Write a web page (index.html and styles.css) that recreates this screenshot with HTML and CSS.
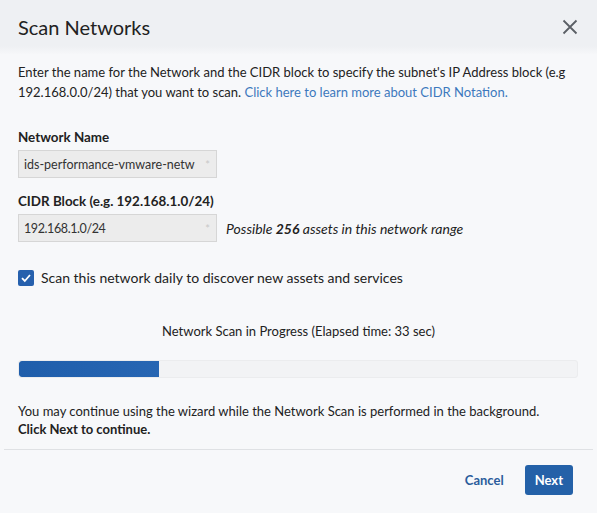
FILE: index.html
```html
<!DOCTYPE html>
<html>
<head>
<meta charset="utf-8">
<link rel="stylesheet" href="styles.css">
</head>
<body>
<div class="modal">
  <div class="header">
    <h1 class="title">Scan Networks</h1>
    <svg class="close" width="16" height="16" viewBox="0 0 16 16"><path d="M1.5 1.5 L14.5 14.5 M14.5 1.5 L1.5 14.5" stroke="#5b5f66" stroke-width="1.8" fill="none"/></svg>
  </div>
  <div class="body">
    <p class="intro">Enter the name for the Network and the CIDR block to specify the subnet's IP Address block (e.g 192.168.0.0/24) that you want to scan. <span class="link">Click here to learn more about CIDR Notation.</span></p>
    <div class="field">
      <label class="label">Network Name</label>
      <div class="input"><span>ids-performance-vmware-netw</span><span class="ast">*</span></div>
    </div>
    <div class="field">
      <label class="label">CIDR Block (e.g. 192.168.1.0/24)</label>
      <div class="row">
        <div class="input"><span class="ip">192.168.1.0/24</span><span class="ast">*</span></div>
        <span class="hint">Possible <b>256</b> assets in this network range</span>
      </div>
    </div>
    <div class="check">
      <span class="box"><svg width="12" height="12" viewBox="0 0 12 12"><path d="M2 6.2 L4.8 9 L10 3" stroke="#fff" stroke-width="1.8" fill="none"/></svg></span>
      <span>Scan this network daily to discover new assets and services</span>
    </div>
    <div class="status">Network Scan in Progress (Elapsed time: 33 sec)</div>
    <div class="track"><div class="fill" style="width:25%"></div></div>
    <p class="note">You may continue using the wizard while the Network Scan is performed in the background.<br><b>Click Next to continue.</b></p>
  </div>
  <div class="footer">
    <button class="btn cancel">Cancel</button>
    <button class="btn next">Next</button>
  </div>
</div>
</body>
</html>
```
FILE: styles.css
```css
html, body { margin: 0; padding: 0; }
body {
  background: #f7f8fa;
  font-family: Lato, "Liberation Sans", sans-serif;
  color: #222;
  width: 597px;
  height: 513px;
  overflow: hidden;
}
.modal { display: flex; flex-direction: column; height: 513px; }
.header {
  height: 54px;
  background: linear-gradient(#eef0f3 0, #eef0f3 46px, #f6f7f9 54px);
  display: flex;
  align-items: center;
  justify-content: space-between;
  padding: 0 18px 0 18px;
}
.title { margin: 0; font-size: 20px; font-weight: 400; color: #222; padding-top: 0; }
.close { margin-right: 1px; }
.body { padding: 8px 18px 0 18px; }
.intro { margin: 0; font-size: 13px; line-height: 20px; color: #222; }
.link { color: #3d78bd; }
.field { margin-top: 27px; }
.field + .field { margin-top: 15px; }
.label { display: block; font-size: 13.4px; font-weight: 700; line-height: 16px; margin-bottom: 5px; }
.input {
  width: 199px;
  height: 28px;
  box-sizing: border-box;
  background: #ececec;
  border: 1px solid #d6d6d6;
  display: flex;
  align-items: center;
  justify-content: space-between;
  padding: 0 6px 0 5px;
  font-size: 12.5px;
  color: #333;
}
.ip { letter-spacing: -0.4px; }
.ast { color: #c8c8c8; font-size: 11px; }
.row { display: flex; align-items: center; gap: 9px; }
.hint { font-size: 14px; font-style: italic; color: #222; }
.check { display: flex; align-items: center; gap: 7px; margin-top: 27px; font-size: 14px; }
.box {
  width: 16px; height: 16px; border-radius: 2px; background: #2660ad;
  display: flex; align-items: center; justify-content: center;
}
.status { text-align: center; font-size: 13px; margin-top: 37px; line-height: 16px; }
.track {
  margin-top: 21px;
  height: 18px;
  background: #f2f3f5;
  border: 1px solid #ebecee;
  border-radius: 3px;
  box-sizing: border-box;
  overflow: hidden;
  width: 560px;
}
.fill { height: 100%; background: linear-gradient(90deg, #1f5eab, #2766b3); border-radius: 3px 0 0 3px; }
.note { margin: 24px 0 0 0; font-size: 13px; line-height: 18px; }
.footer {
  margin: 11px 4px 0 4px;
  border-top: 1px solid #dfe1e4;
  display: flex;
  justify-content: flex-end;
  align-items: center;
  gap: 21px;
  padding: 15px 20px 0 0;
}
.btn { font-family: inherit; font-size: 13px; font-weight: 700; border: none; cursor: pointer; }
.cancel { background: none; color: #2b5d9c; padding: 0; }
.next { background: #2461a8; color: #fff; height: 30px; padding: 0 10px; border-radius: 3px; }
```
